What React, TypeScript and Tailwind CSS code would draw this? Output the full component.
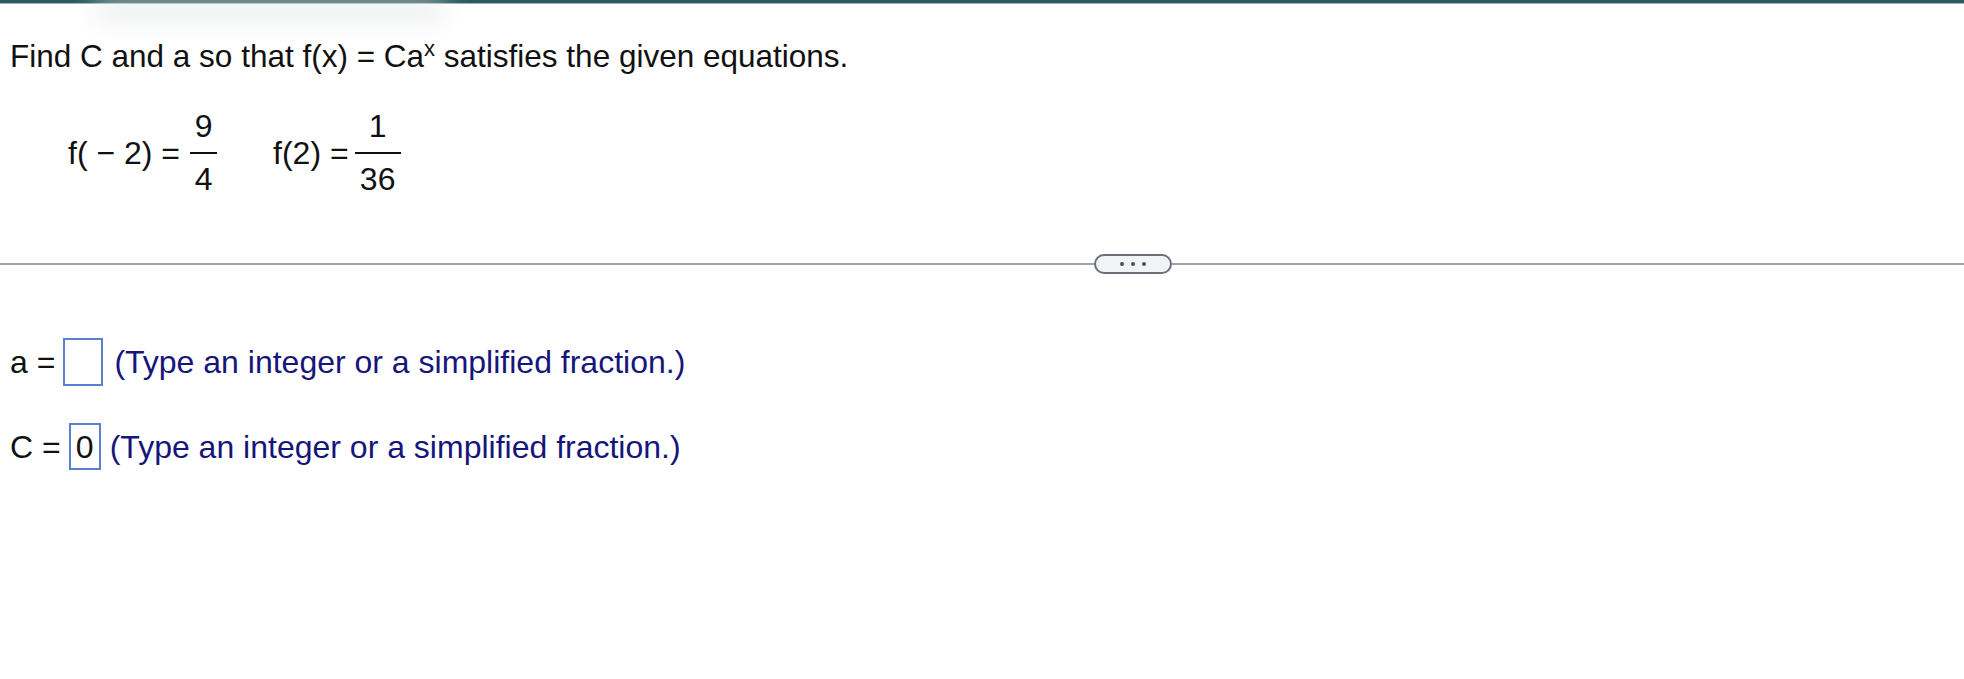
export default function App() {
  return (
    <div className="min-h-[679px] w-full bg-white font-['Liberation_Sans',Arial,sans-serif] text-[#111]">
      <div className="h-[3px] bg-[#2f5a5c]" />
      <div className="h-[1px] bg-[#9bb7b8]" />
      <div className="ml-[95px] h-[14px] w-[350px] bg-gray-200 blur-md" />

      <p className="mt-[20px] pl-[10px] text-[31.5px] leading-[36px]">
        Find C and a so that f(x) = Ca
        <span className="align-[11px] text-[22px] leading-[0]">x</span> satisfies the given equations.
      </p>

      <div className="mt-[36px] flex items-center pl-[68px] text-[32px]">
        <div className="flex items-center">
          <span className="leading-[32px]">f( − 2) =</span>
          <Fraction top="9" bottom="4" className="ml-[10px] w-[27px]" />
        </div>
        <div className="ml-[56px] flex items-center">
          <span className="leading-[32px]">f(2) =</span>
          <Fraction top="1" bottom="36" className="ml-[6px] w-[46px]" />
        </div>
      </div>

      <div className="mt-[59px] flex h-[20px] items-center">
        <div className="h-[2px] w-[1094px] bg-[#9ea3ab]" />
        <div className="flex h-[20px] w-[78px] items-center justify-center gap-[7px] rounded-full border-2 border-[#6b7079] bg-[#f2f3f5]">
          <span className="h-[4px] w-[4px] rounded-full bg-[#4b5058]" />
          <span className="h-[4px] w-[4px] rounded-full bg-[#4b5058]" />
          <span className="h-[4px] w-[4px] rounded-full bg-[#4b5058]" />
        </div>
        <div className="h-[2px] flex-1 bg-[#9ea3ab]" />
      </div>

      <div className="mt-[64px] flex items-center pl-[10px] text-[32px] leading-[36px]">
        <span>a =</span>
        <div className="ml-[8px] h-[48px] w-[40px] border-2 border-[#5a80cf]" />
        <span className="ml-[11px] text-[#16167a]">(Type an integer or a simplified fraction.)</span>
      </div>

      <div className="mt-[37px] flex items-center pl-[10px] text-[32px] leading-[36px]">
        <span>C =</span>
        <div className="ml-[8px] flex h-[47px] w-[32px] items-center justify-center border-2 border-[#5a80cf]">
          0
        </div>
        <span className="ml-[9px] text-[#16167a]">(Type an integer or a simplified fraction.)</span>
      </div>
    </div>
  );
}

function Fraction({ top, bottom, className }: { top: string; bottom: string; className?: string }) {
  return (
    <div className={`flex flex-col items-center text-[32px] leading-[32px] ${className ?? ""}`}>
      <span>{top}</span>
      <span className="mt-[10px] h-[2px] w-full bg-[#111]" />
      <span className="mt-[9px]">{bottom}</span>
    </div>
  );
}
